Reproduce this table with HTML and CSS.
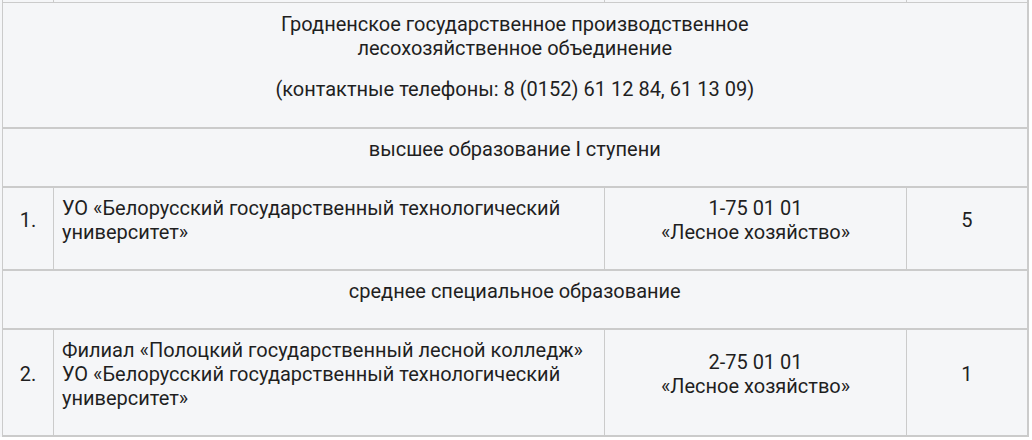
FILE: index.html
```html
<!DOCTYPE html>
<html lang="ru">
<head>
<meta charset="utf-8">
<title>Таблица</title>
<link rel="stylesheet" href="styles.css">
</head>
<body>
<div class="wrap">
<table class="plan">
  <colgroup>
    <col class="c-num">
    <col class="c-name">
    <col class="c-spec">
    <col class="c-qty">
  </colgroup>
  <tbody>
    <tr class="stub">
      <td></td><td></td><td></td><td></td>
    </tr>
    <tr class="org">
      <td colspan="4">
        <p>Гродненское государственное производственное<br>лесохозяйственное объединение</p>
        <p>(контактные телефоны: 8 (0152) 61 12 84, 61 13 09)</p>
      </td>
    </tr>
    <tr class="level">
      <td colspan="4"><p>высшее образование I ступени</p></td>
    </tr>
    <tr>
      <td class="num"><p>1.</p></td>
      <td class="name"><p>УО «Белорусский государственный технологический университет»</p></td>
      <td class="spec"><p>1-75 01 01<br>«Лесное хозяйство»</p></td>
      <td class="qty"><p>5</p></td>
    </tr>
    <tr class="level">
      <td colspan="4"><p>среднее специальное образование</p></td>
    </tr>
    <tr>
      <td class="num"><p>2.</p></td>
      <td class="name"><p>Филиал «Полоцкий государственный лесной колледж»<br>УО «Белорусский государственный технологический университет»</p></td>
      <td class="spec"><p>2-75 01 01<br>«Лесное хозяйство»</p></td>
      <td class="qty"><p>1</p></td>
    </tr>
  </tbody>
</table>
</div>
</body>
</html>
```
FILE: styles.css
```css
html, body {
  margin: 0;
  padding: 0;
  background: #ffffff;
}

.wrap {
  width: 1027px;
  background: #f5f6f8;
  padding-left: 2px;
  box-sizing: border-box;
}

.plan {
  border-collapse: collapse;
  table-layout: fixed;
  width: 1025px;
  background: #f5f6f8;
  font-family: Roboto, "Liberation Sans", Arial, sans-serif;
  font-size: 20px;
  line-height: 24px;
  color: #1f1f1f;
}

.c-num { width: 51px; }
.c-name { width: 551px; }
.c-spec { width: 302px; }
.c-qty { width: 121px; }

.plan td {
  border: 1px solid #cbcbcb;
  padding: 8px 8px;
  vertical-align: middle;
}

.plan td:last-child {
  border-right: 2px solid #cbcbcb;
}

.plan tr + tr td {
  border-top: 2px solid #cbcbcb;
}

.plan tr:last-child td {
  border-bottom: 2px solid #cbcbcb;
}

.plan tr.stub td {
  height: 2px;
  padding: 0;
  border-top: none;
  border-bottom: 1px solid #cbcbcb;
}

.plan tr.stub + tr td {
  border-top: 1px solid #cbcbcb;
}

.plan p {
  margin: 0 0 17px;
}

.org td {
  text-align: center;
  padding-top: 9px;
  padding-bottom: 9px;
}

.level td {
  text-align: center;
}

.num, .spec, .qty {
  text-align: center;
}

.name {
  text-align: left;
}
```
